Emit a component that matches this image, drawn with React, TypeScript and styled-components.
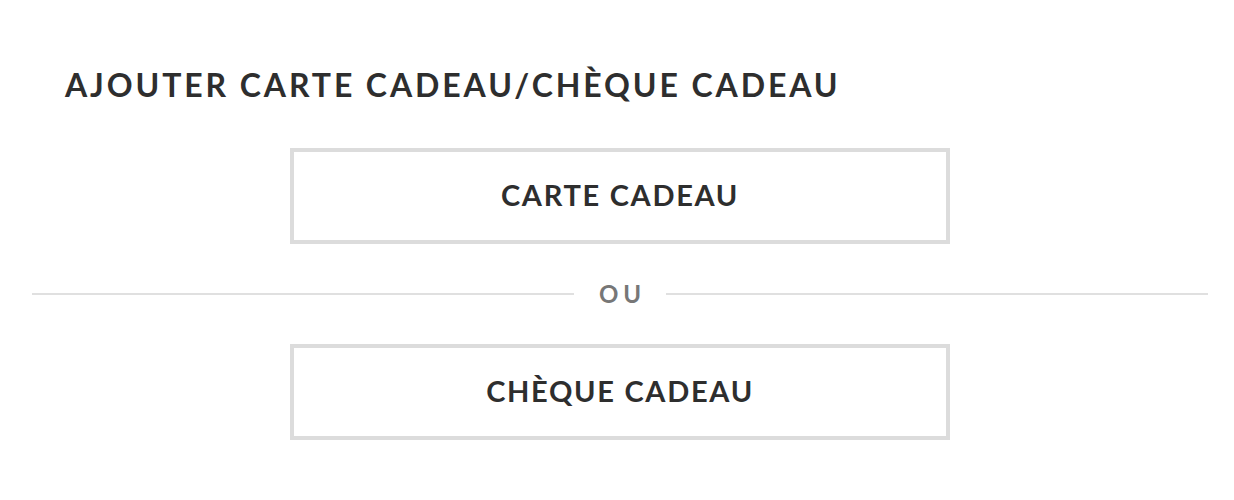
import React from 'react';
import styled, {createGlobalStyle} from 'styled-components';

const GlobalStyle = createGlobalStyle`
  body {
    margin: 0;
    background: #fff;
    font-family: Lato, "Liberation Sans", sans-serif;
    color: #2e2e2e;
  }
`;

const Page = styled.div`
  padding: 0 26px 0 32px;
`;

const Title = styled.h2`
  margin: 0 0 43px;
  padding: 65px 0 0 33px;
  font-size: 32px;
  line-height: 40px;
  font-weight: 700;
  letter-spacing: 2.9px;
  text-transform: uppercase;
`;

const ChoiceButton = styled.button`
  display: flex;
  align-items: center;
  justify-content: center;
  width: 660px;
  height: 96px;
  margin: 0 auto;
  padding: 0 0 3px;
  background: #fff;
  border: 4px solid #dcdcdc;
  box-sizing: border-box;
  font-family: inherit;
  font-size: 29px;
  font-weight: 700;
  letter-spacing: 1.7px;
  color: #2e2e2e;
  cursor: pointer;
`;

const Separator = styled.div`
  display: flex;
  align-items: center;
  height: 100px;
  gap: 20px;
`;

const Rule = styled.span`
  flex: 1;
  height: 2px;
  background: #e0e0e0;
`;

const Or = styled.span`
  font-size: 24px;
  font-weight: 700;
  letter-spacing: 5px;
  color: #777;
  padding: 0 0 2px 5px;
`;

const App = () => {
  return (
    <Page>
      <GlobalStyle/>
      <Title>Ajouter carte cadeau/chèque cadeau</Title>
      <ChoiceButton>CARTE CADEAU</ChoiceButton>
      <Separator>
        <Rule/>
        <Or>OU</Or>
        <Rule/>
      </Separator>
      <ChoiceButton>CHÈQUE CADEAU</ChoiceButton>
    </Page>
  );
}

export default App;
